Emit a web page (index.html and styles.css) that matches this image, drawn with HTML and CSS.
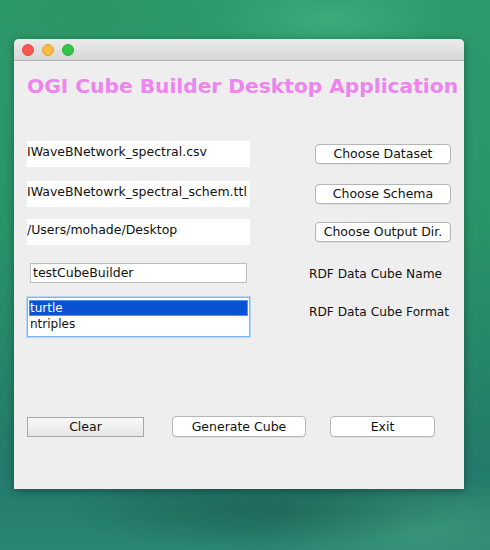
FILE: index.html
```html
<!DOCTYPE html>
<html>
<head>
<meta charset="utf-8">
<link rel="stylesheet" href="styles.css">
</head>
<body>
<div class="desktop">
  <div class="window">
    <div class="titlebar">
      <span class="light red"></span>
      <span class="light yellow"></span>
      <span class="light green"></span>
    </div>
    <div class="content">
      <h1 class="title">OGI Cube Builder Desktop Application</h1>
      <div class="row row1">
        <div class="path">IWaveBNetwork_spectral.csv</div>
        <button class="btn side">Choose Dataset</button>
      </div>
      <div class="row row2">
        <div class="path">IWaveBNetowrk_spectral_schem.ttl</div>
        <button class="btn side">Choose Schema</button>
      </div>
      <div class="row row3">
        <div class="path">/Users/mohade/Desktop</div>
        <button class="btn side">Choose Output Dir.</button>
      </div>
      <div class="row row4">
        <div class="input">testCubeBuilder</div>
        <div class="label">RDF Data Cube Name</div>
      </div>
      <div class="row row5">
        <div class="list">
          <div class="item selected">turtle</div>
          <div class="item">ntriples</div>
        </div>
        <div class="label">RDF Data Cube Format</div>
      </div>
      <div class="actions">
        <button class="btn clear">Clear</button>
        <button class="btn gen">Generate Cube</button>
        <button class="btn exit">Exit</button>
      </div>
    </div>
  </div>
</div>
</body>
</html>
```
FILE: styles.css
```css
html, body {
  margin: 0;
  padding: 0;
}
body {
  width: 490px;
  height: 550px;
  overflow: hidden;
  font-family: "DejaVu Sans", "Noto Sans", sans-serif;
}
.desktop {
  width: 490px;
  height: 550px;
  padding-top: 39px;
  box-sizing: border-box;
  background:
    radial-gradient(ellipse 120px 40px at 330px 20px, rgba(90,200,150,0.35), transparent),
    radial-gradient(ellipse 160px 60px at 80px 10px, rgba(40,140,90,0.4), transparent),
    radial-gradient(ellipse 200px 40px at 260px 510px, rgba(20,80,70,0.5), transparent),
    radial-gradient(ellipse 160px 50px at 420px 530px, rgba(80,170,130,0.45), transparent),
    linear-gradient(180deg, #2e9b6c 0%, #299468 40%, #237a6a 85%, #2a8574 100%);
}
.window {
  margin-left: 14px;
  width: 450px;
  height: 450px;
  background: #eeeeee;
  border-radius: 5px 5px 0 0;
  box-shadow: 0 2px 8px rgba(0,0,0,0.35);
  display: flex;
  flex-direction: column;
}
.titlebar {
  height: 21px;
  border-bottom: 1px solid #b4b4b4;
  background: linear-gradient(180deg, #ececec, #d6d6d6);
  border-radius: 5px 5px 0 0;
  display: flex;
  align-items: center;
  padding-left: 8px;
  gap: 8px;
}
.light {
  width: 12px;
  height: 12px;
  border-radius: 50%;
  box-sizing: border-box;
}
.red { background: #fc5753; border: 1px solid #df4744; }
.yellow { background: #fdbc40; border: 1px solid #de9f34; }
.green { background: #33c748; border: 1px solid #27aa35; }
.content {
  flex: 1;
  padding-left: 13px;
  display: flex;
  flex-direction: column;
}
.title {
  margin: 13px 0 0 0;
  font-family: "DejaVu Sans", sans-serif;
  font-weight: bold;
  font-size: 20.2px;
  line-height: 24px;
  color: #ee85ee;
  white-space: nowrap;
}
.row {
  display: flex;
  align-items: center;
}
.row1 { margin-top: 43px; }
.row2 { margin-top: 14px; }
.row3 { margin-top: 12px; }
.row4 { margin-top: 18px; }
.row5 { margin-top: 14px; }
.path {
  width: 223px;
  height: 26px;
  background: #ffffff;
  font-size: 12.5px;
  color: #111;
  line-height: 22px;
  white-space: nowrap;
  overflow: hidden;
}
.btn {
  font-family: "DejaVu Sans", sans-serif;
  font-size: 12.5px;
  color: #111;
  background: #ffffff;
  border: 1px solid #b6b6b6;
  border-radius: 4px;
  padding: 0;
  height: 20px;
  line-height: 18px;
  box-shadow: 0 1px 0 rgba(0,0,0,0.06);
}
.side {
  margin-left: 65px;
  width: 136px;
}
.input {
  margin-left: 3px;
  width: 217px;
  height: 20px;
  box-sizing: border-box;
  border: 1px solid #bdbdbd;
  background: #fff;
  font-size: 12.5px;
  line-height: 18px;
  padding-left: 2px;
  color: #111;
}
.label {
  font-size: 12.2px;
  color: #111;
}
.row4 .label { margin-left: 62px; margin-top: 1px; }
.row5 { align-items: flex-start; }
.row5 .label { margin-left: 59px; margin-top: 8px; }
.list {
  width: 223px;
  height: 40px;
  box-sizing: border-box;
  border: 1px solid #7db3ef;
  box-shadow: 0 0 0 1px #b8d6f7;
  background: #fff;
  padding: 2px 1px;
}
.item {
  height: 16px;
  line-height: 16px;
  font-size: 12px;
  color: #111;
  padding-left: 1px;
}
.item.selected {
  background: #0a52d4;
  color: #fff;
  box-shadow: inset 0 0 0 1px #4f8ff0;
}
.actions {
  margin-top: 79px;
  display: flex;
  align-items: center;
}
.clear {
  width: 117px;
  border-radius: 0;
  border-color: #a6a6a6;
  background: linear-gradient(180deg, #f8f8f8, #e6e6e6);
  box-shadow: none;
}
.gen {
  margin-left: 28px;
  width: 134px;
  height: 21px;
}
.exit {
  margin-left: 24px;
  width: 105px;
  height: 21px;
}
```
